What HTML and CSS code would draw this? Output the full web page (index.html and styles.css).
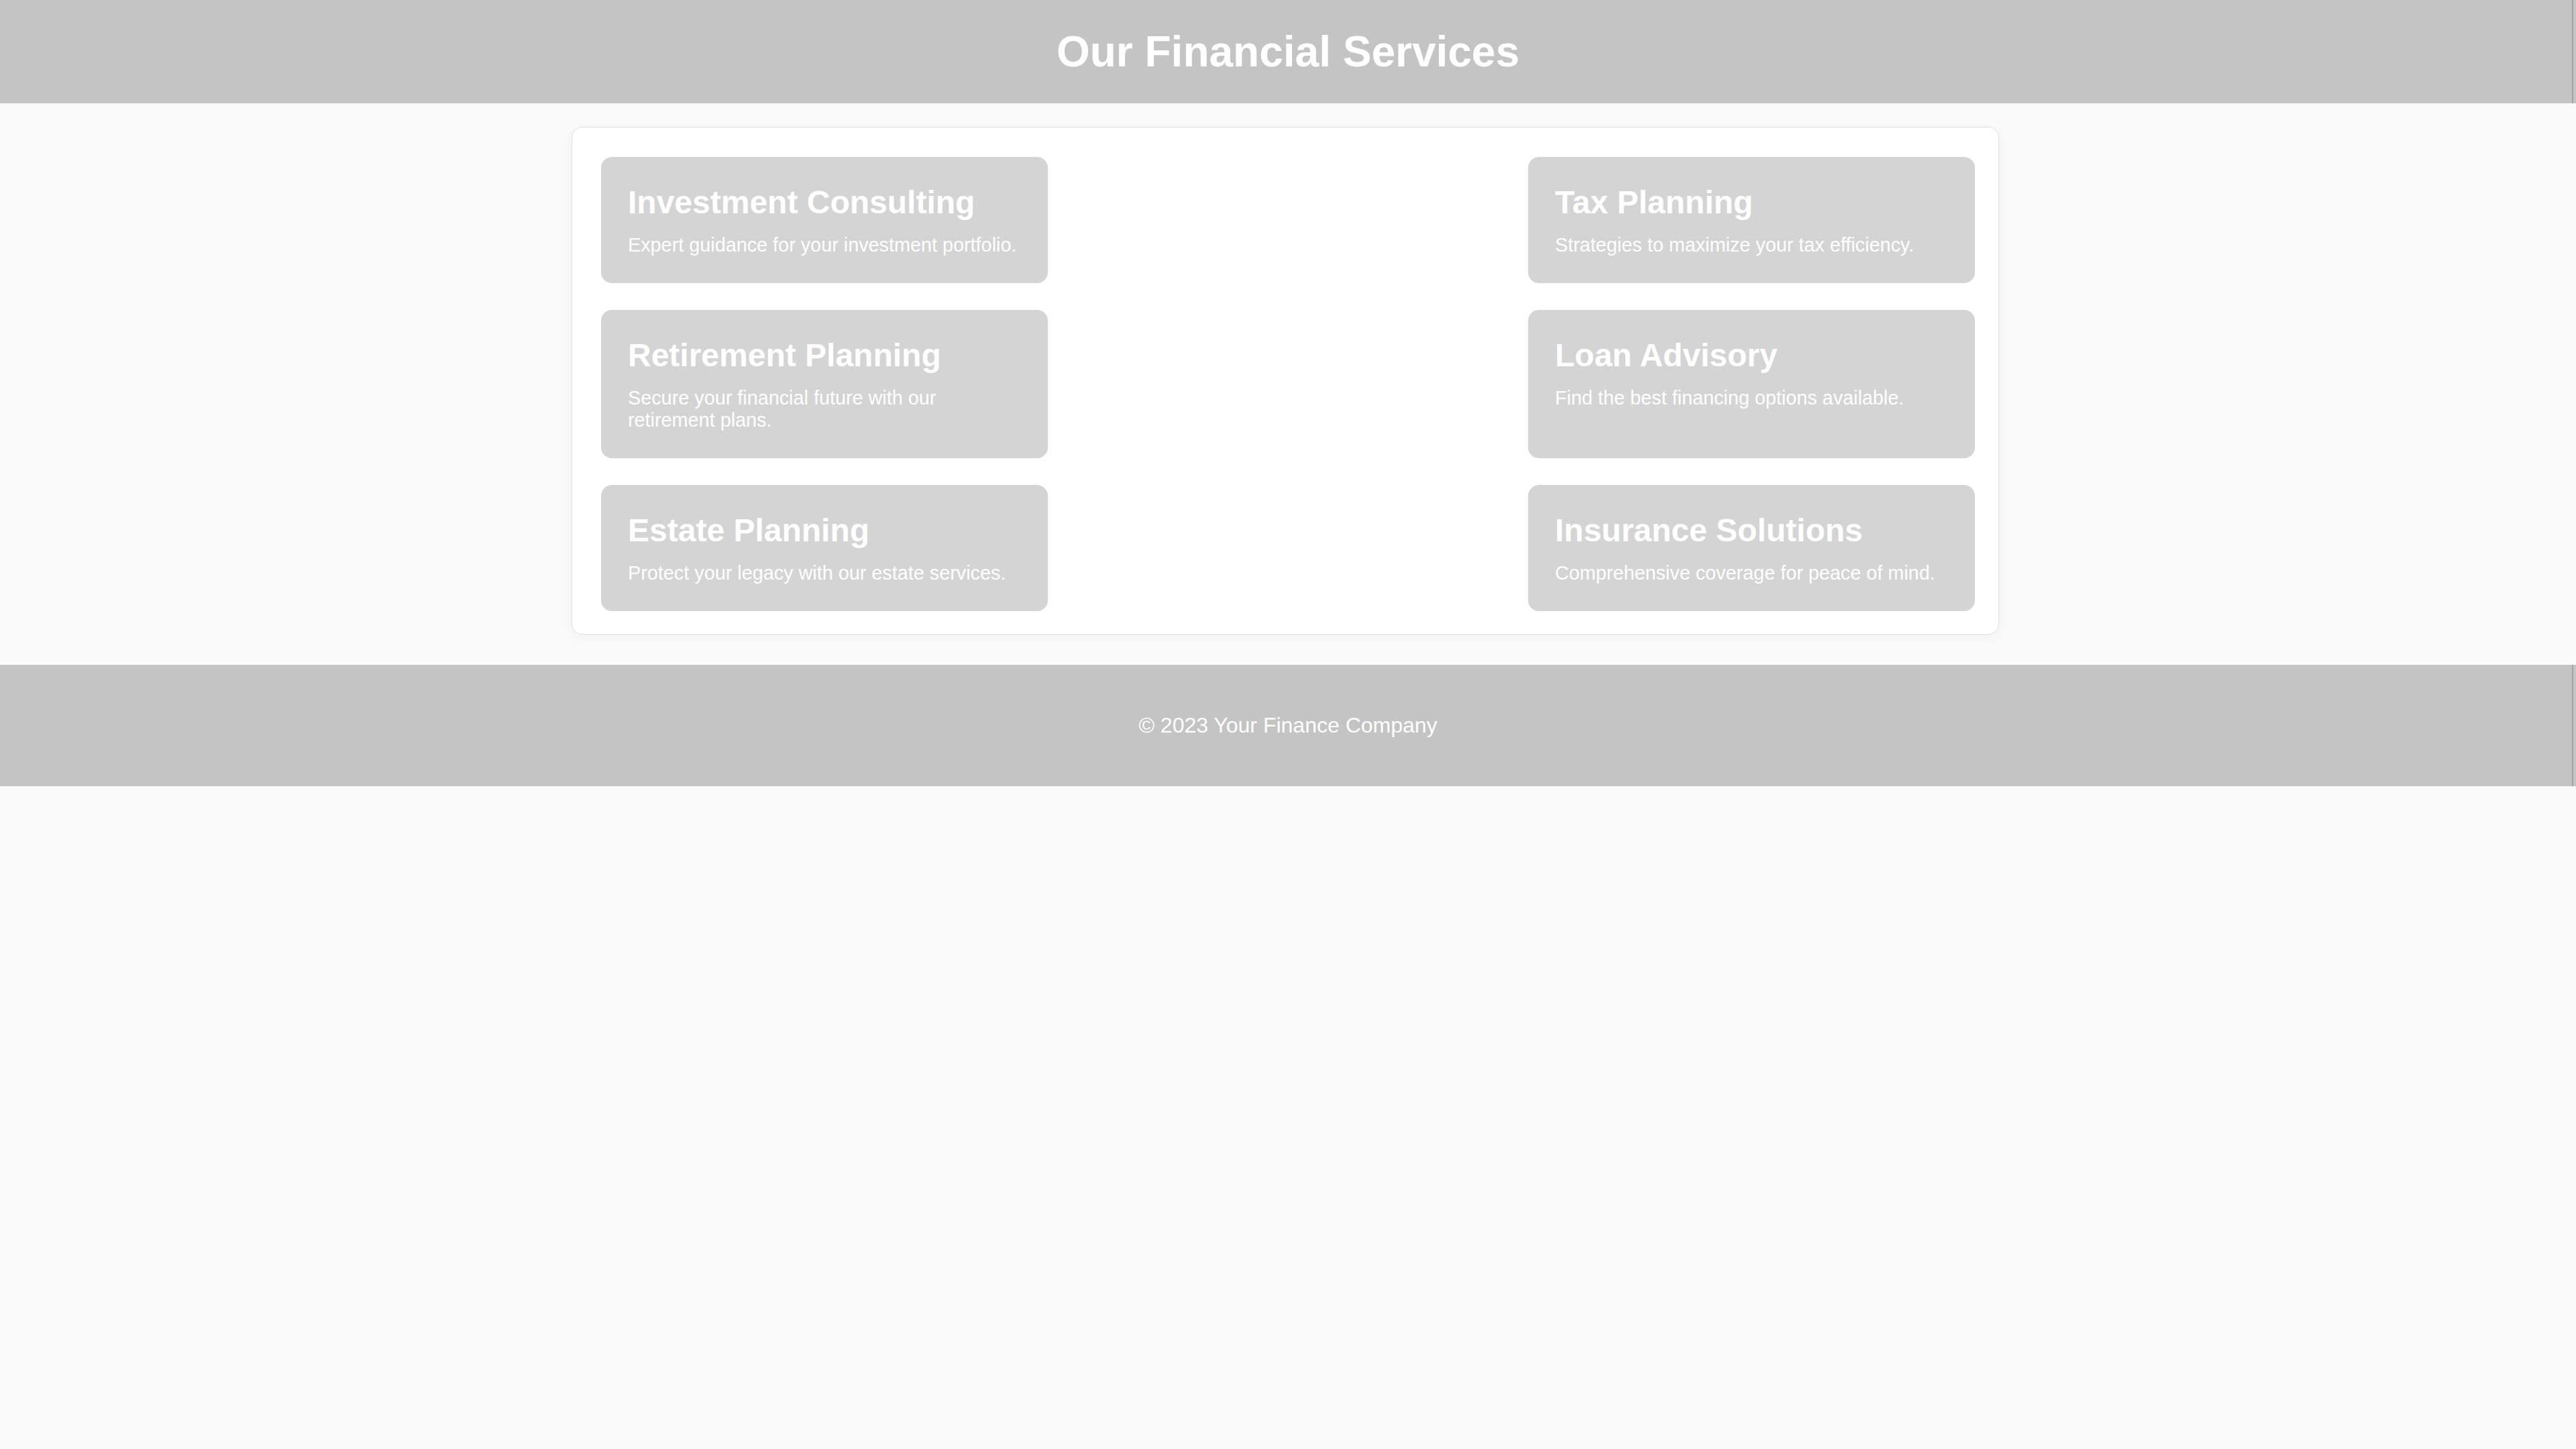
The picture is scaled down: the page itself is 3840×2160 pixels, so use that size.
FILE: index.html
```html
<!DOCTYPE html>
<html lang="en">
<head>
<meta charset="utf-8">
<title>Our Financial Services</title>
<link rel="stylesheet" href="styles.css">
</head>
<body>
<header class="site-header">
  <h1 class="site-title">Our Financial Services</h1>
</header>
<main class="services">
  <div class="service-grid">
    <section class="card">
      <h2 class="card-title">Investment Consulting</h2>
      <p class="card-text">Expert guidance for your investment portfolio.</p>
    </section>
    <section class="card">
      <h2 class="card-title">Tax Planning</h2>
      <p class="card-text">Strategies to maximize your tax efficiency.</p>
    </section>
    <section class="card">
      <h2 class="card-title">Retirement Planning</h2>
      <p class="card-text">Secure your financial future with our retirement plans.</p>
    </section>
    <section class="card">
      <h2 class="card-title">Loan Advisory</h2>
      <p class="card-text">Find the best financing options available.</p>
    </section>
    <section class="card">
      <h2 class="card-title">Estate Planning</h2>
      <p class="card-text">Protect your legacy with our estate services.</p>
    </section>
    <section class="card">
      <h2 class="card-title">Insurance Solutions</h2>
      <p class="card-text">Comprehensive coverage for peace of mind.</p>
    </section>
  </div>
</main>
<footer class="site-footer">
  <p class="footer-text">&copy; 2023 Your Finance Company</p>
</footer>
</body>
</html>
```
FILE: styles.css
```css
html, body {
  margin: 0;
  padding: 0;
}

body {
  background: #fafafa;
  font-family: "Liberation Sans", Arial, sans-serif;
  color: #ffffff;
}

.site-header {
  background:
    linear-gradient(to right, transparent calc(100% - 6px), #a2a2a2 calc(100% - 6px), #a2a2a2 calc(100% - 4px), transparent calc(100% - 4px)),
    #c4c4c4;
  padding: 40px;
  text-align: center;
}

.site-title {
  margin: 0;
  font-size: 64px;
  font-weight: 700;
  line-height: normal;
  color: #ffffff;
}

.services {
  box-sizing: border-box;
  width: 2128px;
  margin: 35px 0 45px calc(50% - 1068px);
  padding: 44px 35px 34px 43px;
  background: #ffffff;
  border: 1px solid #e2e2e2;
  border-radius: 16px;
  box-shadow: 0 4px 20px rgba(0, 0, 0, 0.04);
}

.service-grid {
  display: grid;
  grid-template-columns: 666px 666px;
  justify-content: space-between;
  row-gap: 40px;
}

.card {
  background: #d4d4d4;
  border-radius: 16px;
  padding: 40px;
  color: #ffffff;
}

.card-title {
  margin: 0 0 20px;
  font-size: 48px;
  font-weight: 700;
  line-height: normal;
}

.card-text {
  margin: 0;
  font-size: 28.8px;
  line-height: normal;
}

.site-footer {
  background:
    linear-gradient(to right, transparent calc(100% - 6px), #a2a2a2 calc(100% - 6px), #a2a2a2 calc(100% - 4px), transparent calc(100% - 4px)),
    #c4c4c4;
  padding: 40px;
  text-align: center;
}

.footer-text {
  margin: 32px 0;
  font-size: 32px;
  line-height: normal;
  color: #ffffff;
}
```
